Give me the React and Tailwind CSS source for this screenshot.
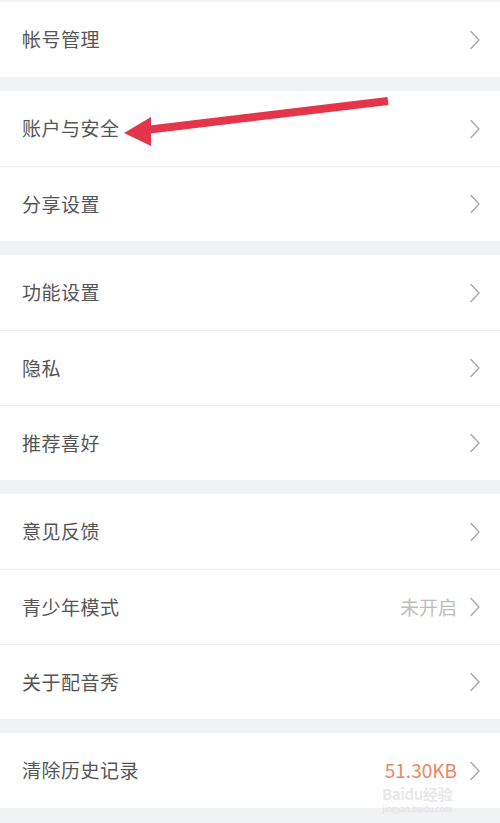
import React from 'react';

const sections = [
  [{ label: '帐号管理' }],
  [{ label: '账户与安全' }, { label: '分享设置' }],
  [{ label: '功能设置' }, { label: '隐私' }, { label: '推荐喜好' }],
  [
    { label: '意见反馈' },
    { label: '青少年模式', value: '未开启' },
    { label: '关于配音秀' },
  ],
  [{ label: '清除历史记录', value: '51.30KB', accent: true }],
];

function Chevron() {
  return (
    <svg width="12" height="20" viewBox="0 0 12 20" fill="none" className="shrink-0">
      <path d="M2 1.5 L10 10 L2 18.5" stroke="#a8a8a8" strokeWidth="1.4" strokeLinecap="round" strokeLinejoin="round" />
    </svg>
  );
}

function Row({ item, first }) {
  return (
    <div className={`h-[75px] flex items-center justify-between pl-[22px] pr-[19px] bg-white ${first ? '' : 'border-t border-[#f0f0f0]'}`}>
      <span className="text-[19px] text-[#555555] tracking-[0.5px]">{item.label}</span>
      <div className="flex items-center gap-[12px]">
        {item.value && (
          <span className={`text-[19px] ${item.accent ? 'text-[#ec8762]' : 'text-[#bdbdbd]'}`}>{item.value}</span>
        )}
        <Chevron />
      </div>
    </div>
  );
}

export default function App() {
  return (
    <div
      className="relative w-[500px] h-[823px] overflow-hidden bg-[#f1f2f4] pt-[2px] flex flex-col gap-[14px]"
      style={{ fontFamily: '"Noto Sans CJK SC", "Noto Sans", sans-serif' }}
    >
      {sections.map((rows, i) => (
        <div key={i} className="bg-white">
          {rows.map((item, j) => (
            <Row key={item.label} item={item} first={j === 0} />
          ))}
        </div>
      ))}

      {/* red annotation arrow */}
      <svg className="absolute left-0 top-0 pointer-events-none" width="500" height="823">
        <line x1="388" y1="101" x2="146" y2="130" stroke="#e5354b" strokeWidth="8" />
        <polygon points="124,133 151,117 151,146" fill="#e5354b" />
      </svg>

      {/* watermark */}
      <div className="absolute left-[382px] top-[786px] flex flex-col items-center pointer-events-none">
        <span className="text-[15px] leading-[15px] font-bold text-[#e8e8e8] tracking-tight">Baidu经验</span>
        <span className="text-[8px] leading-[8px] text-[#e0e0e0] mt-[4px]">jingyan.baidu.com</span>
      </div>
    </div>
  );
}
